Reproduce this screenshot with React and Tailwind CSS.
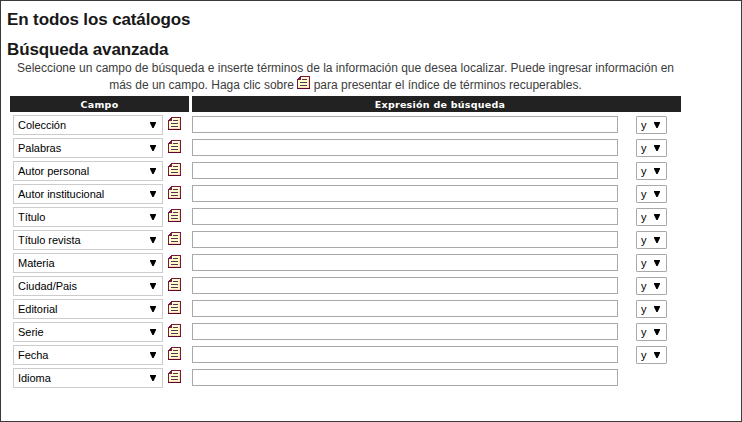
const fields = [
  'Colección', 'Palabras', 'Autor personal', 'Autor institucional', 'Título', 'Título revista',
  'Materia', 'Ciudad/Pais', 'Editorial', 'Serie', 'Fecha', 'Idioma',
];

function IndexIcon({ className = '' }) {
  return (
    <svg className={className} width="13" height="13" viewBox="0 0 13 13" shapeRendering="crispEdges">
      <path d="M3 0H13V13H0V3H1V2H2V1H3Z" fill="#7a1545" />
      <path d="M4 1H12V12H1V4H4Z" fill="#ffffcc" />
      <path d="M1 11H12V12H1ZM11 2H12V12H11Z" fill="#ffdfb0" />
      <path d="M5 3H10V4H5ZM3 6H10V7H3ZM3 9H10V10H3Z" fill="#5c2f5c" />
      <path d="M0 12H13V13H0Z" fill="#660033" />
    </svg>
  );
}

function Arrow() {
  return (
    <svg width="6" height="6" viewBox="0 0 6 6">
      <path d="M0 0H6V1L3.6 6H2.4L0 1Z" fill="#000" />
    </svg>
  );
}

export default function App() {
  return (
    <div className="h-[422px] w-[742px] overflow-hidden border border-[#3a3a3a] bg-white font-['Liberation_Sans',Arial,sans-serif]">
      <h1 className="ml-[6px] mt-[9px] h-[20px] w-fit whitespace-nowrap text-[17px] font-bold leading-[20px] tracking-[-0.12px] text-[#181818]">En todos los catálogos</h1>
      <h2 className="ml-[6px] mt-[10px] h-[20px] w-fit whitespace-nowrap text-[17px] font-bold leading-[20px] tracking-[-0.13px] text-[#181818]">Búsqueda avanzada</h2>
      <div className="ml-[9px] h-[36px] w-[671px] whitespace-nowrap text-center text-[12px] leading-[17px] text-[#3c3c3c]">
        <p>Seleccione un campo de búsqueda e inserte términos de la información que desea localizar. Puede ingresar información en</p>
        <p className="-mt-px">
          más de un campo. Haga clic sobre <IndexIcon className="inline-block align-[0px]" /> para presentar el índice de términos recuperables.
        </p>
      </div>
      <div className="ml-[9px] flex h-4 w-[671px] gap-[3px] text-center font-['DejaVu_Sans',sans-serif] text-[9.5px] font-bold leading-[17px] tracking-[0.26px] text-white">
        <div className="w-[179px] bg-[#222]">Campo</div>
        <div className="flex-1 bg-[#222] pl-[7px]">Expresión de búsqueda</div>
      </div>
      <div className="ml-[12px] mt-[3px] flex flex-col gap-[3px] text-[11px] text-black">
        {fields.map((field, i) => (
          <div key={field} className="flex h-5 items-start">
            <div className="flex h-5 w-[150px] items-center justify-between border border-[#ccc] pl-1 pr-[6px]">
              <span className="tracking-[-0.03px]">{field}</span>
              <Arrow />
            </div>
            <IndexIcon className="ml-[5px] mt-[2px]" />
            <div className="ml-[11px] mt-px h-[17px] w-[426px] border border-[#a9a9a9]" />
            {i < fields.length - 1 && (
              <div className="ml-[18px] mt-px flex h-[18px] w-[31px] items-center justify-between rounded-[1px] border border-[#a9a9a9] pl-1 pr-[6px]">
                <span>y</span>
                <Arrow />
              </div>
            )}
          </div>
        ))}
      </div>
    </div>
  );
}
